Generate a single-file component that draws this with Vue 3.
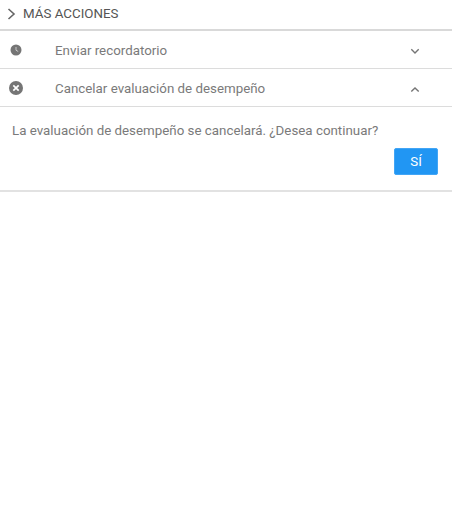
<script setup>
const title = 'MÁS ACCIONES'
</script>

<template>
  <div class="page">
    <div class="header">
      <svg class="arrow" width="10" height="12" viewBox="0 0 10 12"><path d="M1.5 1 L7 6 L1.5 11" fill="none" stroke="#666" stroke-width="1.6"/></svg>
      <span>{{ title }}</span>
    </div>

    <div class="row">
      <div class="row-icon">
        <svg width="12" height="12" viewBox="0 0 12 12"><circle cx="6" cy="6" r="5.5" fill="#757575"/><path d="M6 3 V6.2 L8.2 7.5" fill="none" stroke="#ddd" stroke-width="0.8"/></svg>
      </div>
      <span class="row-label">Enviar recordatorio</span>
      <svg class="chev" width="10" height="7" viewBox="0 0 10 7"><path d="M1.3 1.2 L5 4.9 L8.7 1.2" fill="none" stroke="#757575" stroke-width="1.4"/></svg>
    </div>

    <div class="row">
      <div class="row-icon">
        <svg width="14" height="14" viewBox="0 0 14 14"><circle cx="7" cy="7" r="7" fill="#757575"/><path d="M4.3 4.3 L9.7 9.7 M9.7 4.3 L4.3 9.7" stroke="#fff" stroke-width="1.7"/></svg>
      </div>
      <span class="row-label">Cancelar evaluación de desempeño</span>
      <svg class="chev" width="10" height="7" viewBox="0 0 10 7"><path d="M1.3 5.6 L5 1.9 L8.7 5.6" fill="none" stroke="#757575" stroke-width="1.4"/></svg>
    </div>

    <div class="panel">
      <p class="question">La evaluación de desempeño se cancelará. ¿Desea continuar?</p>
      <div class="actions">
        <button class="yes">SÍ</button>
      </div>
    </div>
  </div>
</template>

<style scoped>
.page {
  width: 452px;
  height: 512px;
  background: #fff;
  font-family: Roboto, "Liberation Sans", sans-serif;
  font-size: 13.33px;
  color: #7a7a7a;
}
.header {
  display: flex;
  align-items: center;
  height: 27px;
  padding: 0 0 2px 7px;
  border-bottom: 2px solid #d9d9d9;
  color: #555;
}
.arrow {
  margin-right: 6px;
}
.row {
  display: flex;
  align-items: center;
  height: 36px;
  padding-top: 1px;
  border-bottom: 1px solid #dcdcdc;
}
.row-icon {
  width: 31px;
  display: flex;
  justify-content: center;
}
.row-label {
  margin-left: 24px;
  flex: 1;
}
.chev {
  margin-top: 2px;
  margin-right: 32px;
}
.panel {
  height: 85px;
  padding: 15px 14px 0 12px;
  box-sizing: border-box;
  border-bottom: 2px solid #e2e2e2;
}
.question {
  margin: 0;
  line-height: 17px;
}
.actions {
  display: flex;
  justify-content: flex-end;
  margin-top: 9px;
}
.yes {
  width: 44px;
  height: 27px;
  border: 1px solid #42a5f5;
  border-radius: 2px;
  background: #2196f3;
  color: #fff;
  font-family: inherit;
  font-size: 13.33px;
  padding: 0;
}
</style>

<style>
html, body { background: #fff; }
</style>
